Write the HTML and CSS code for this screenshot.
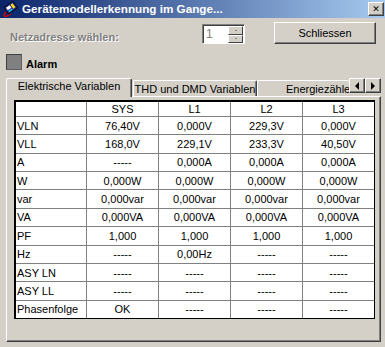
FILE: index.html
```html
<!DOCTYPE html>
<html lang="de">
<head>
    <meta charset="UTF-8">
    <title>Gerätemodellerkennung im Gange...</title>
    <link rel="stylesheet" href="styles.css">
</head>
<body>
    <!-- Titelleiste -->
    <div class="titlebar">
        <svg class="app-icon" width="16" height="16" viewBox="0 0 16 16">
            <path d="M4 11 Q0 15 4 15.5 L9 13" stroke="#e00000" fill="none" stroke-width="1.3"/>
            <g transform="rotate(-35 9 7)">
                <rect x="3.5" y="2.5" width="11" height="8" fill="#1c2c8c" stroke="#000" stroke-width="0.8"/>
                <rect x="5" y="4" width="4.5" height="3" fill="#fff"/>
                <rect x="10.5" y="4" width="2.5" height="5" fill="#ffe000"/>
                <rect x="5" y="8" width="4.5" height="1.5" fill="#30c0e0"/>
            </g>
        </svg>
        <span class="title">Gerätemodellerkennung im Gange...</span>
        <span class="close-btn">&#x2715;</span>
    </div>

    <!-- Adresse + Schliessen -->
    <div class="toprow">
        <span class="addr-label">Netzadresse wählen:</span>
        <div class="spin">
            <span class="spin-value">1</span>
            <div class="spin-btns">
                <span class="spin-btn"><i></i></span>
                <span class="spin-btn"><i></i></span>
            </div>
        </div>
        <button class="btn">Schliessen</button>
    </div>

    <!-- Alarm -->
    <div class="alarm">
        <span class="led"></span>
        <span class="alarm-text">Alarm</span>
    </div>

    <!-- Reiter -->
    <div class="tabs">
        <div class="tab active tab-1">Elektrische Variablen</div>
        <div class="tab tab-2">THD und DMD Variablen</div>
        <div class="tab tab-3">Energiezähle</div>
        <div class="tab-scroll">
            <span class="arrow-btn"><i class="arrow-left"></i></span>
            <span class="arrow-btn"><i class="arrow-right"></i></span>
        </div>
    </div>

    <div class="panel">
        <div class="grid" id="grid"></div>
    </div>

    <script>
        // Messwerte
        const rows = [
            ["", "SYS", "L1", "L2", "L3"],
            ["VLN", "76,40V", "0,000V", "229,3V", "0,000V"],
            ["VLL", "168,0V", "229,1V", "233,3V", "40,50V"],
            ["A", "-----", "0,000A", "0,000A", "0,000A"],
            ["W", "0,000W", "0,000W", "0,000W", "0,000W"],
            ["var", "0,000var", "0,000var", "0,000var", "0,000var"],
            ["VA", "0,000VA", "0,000VA", "0,000VA", "0,000VA"],
            ["PF", "1,000", "1,000", "1,000", "1,000"],
            ["Hz", "-----", "0,00Hz", "-----", "-----"],
            ["ASY LN", "-----", "-----", "-----", "-----"],
            ["ASY LL", "-----", "-----", "-----", "-----"],
            ["Phasenfolge", "OK", "-----", "-----", "-----"]
        ];

        const grid = document.getElementById('grid');
        rows.forEach(row => {
            row.forEach((value, i) => {
                const cell = document.createElement('div');
                cell.classList.add('cell');
                if (i === 0) cell.classList.add('label');
                cell.textContent = value;
                grid.appendChild(cell);
            });
        });
    </script>
</body>
</html>
```

FILE: styles.css
```css
* {
    margin: 0;
    padding: 0;
    box-sizing: border-box;
}

body {
    width: 385px;
    height: 347px;
    overflow: hidden;
    background: #d4d0c8;
    font-family: "Liberation Sans", Arial, sans-serif;
    font-size: 11px;
    color: #000;
}

/* Titelleiste */
.titlebar {
    height: 18px;
    display: flex;
    align-items: center;
    background: linear-gradient(to right, #0a246a, #a6caf0);
    padding: 0 1px 0 2px;
}
.app-icon {
    flex-shrink: 0;
}
.title {
    margin-left: 4px;
    color: #fff;
    font-weight: bold;
    font-size: 11.7px;
    padding-bottom: 1px;
    flex: 1;
    white-space: nowrap;
}
.close-btn {
    width: 16px;
    height: 14px;
    background: #d4d0c8;
    border-top: 1px solid #fff;
    border-left: 1px solid #fff;
    border-right: 1px solid #404040;
    border-bottom: 1px solid #404040;
    box-shadow: inset -1px -1px #808080;
    display: flex;
    align-items: center;
    justify-content: center;
    font-size: 9px;
    font-weight: bold;
    font-family: "DejaVu Sans", sans-serif;
    line-height: 1;
}

/* Adresse */
.toprow {
    display: flex;
    align-items: flex-start;
    margin-top: 4px;
    padding-left: 10px;
    height: 22px;
}
.addr-label {
    width: 192px;
    margin-top: 9px;
    line-height: 13px;
    font-weight: bold;
    color: #808080;
    text-shadow: 1px 1px #fff;
}
.spin {
    width: 43px;
    height: 20px;
    margin-top: 2px;
    display: flex;
    background: #fff;
    border-top: 1px solid #808080;
    border-left: 1px solid #808080;
    border-right: 1px solid #fff;
    border-bottom: 1px solid #fff;
    box-shadow: inset 1px 1px #404040;
}
.spin-value {
    flex: 1;
    padding: 3px 0 0 3px;
    color: #808080;
    font-size: 12px;
    line-height: 13px;
}
.spin-btns {
    width: 16px;
    display: flex;
    flex-direction: column;
    padding: 1px 1px 0 0;
}
.spin-btn {
    flex: 1;
    background: #d4d0c8;
    border-top: 1px solid #fff;
    border-left: 1px solid #fff;
    border-right: 1px solid #404040;
    border-bottom: 1px solid #404040;
    display: flex;
    align-items: center;
    justify-content: center;
}
.spin-btn i {
    width: 2px;
    height: 1px;
    background: #808080;
}
.btn {
    margin-left: 29px;
    width: 102px;
    height: 22px;
    background: #d4d0c8;
    border-top: 1px solid #fff;
    border-left: 1px solid #fff;
    border-right: 1px solid #404040;
    border-bottom: 1px solid #404040;
    box-shadow: inset -1px -1px #808080;
    font-family: inherit;
    font-size: 11px;
    color: #000;
}

/* Alarm */
.alarm {
    display: flex;
    align-items: center;
    margin-top: 10px;
    padding-left: 6px;
    height: 16px;
}
.led {
    width: 16px;
    height: 16px;
    background: #808080;
    border: 1px solid #404040;
    border-right-color: #606060;
    border-bottom-color: #606060;
}
.alarm-text {
    margin-left: 4px;
    margin-top: 3px;
    font-weight: bold;
}

/* Reiter */
.tabs {
    display: flex;
    align-items: flex-end;
    height: 18px;
    margin: 8px 0 0 6px;
}
.tab {
    height: 16px;
    padding-top: 2px;
    line-height: 13px;
    white-space: nowrap;
    overflow: hidden;
    display: flex;
    justify-content: center;
    border-top: 1px solid #fff;
    border-left: 1px solid #fff;
    border-right: 1px solid #404040;
    box-shadow: inset -1px 0 #808080;
    border-radius: 2px 2px 0 0;
}
.tab.active {
    height: 19px;
    padding-top: 1px;
    margin-bottom: -1px;
    background: #d4d0c8;
    position: relative;
    z-index: 1;
}
.tab-1 {
    width: 126px;
}
.tab-2 {
    width: 124px;
    margin-left: 1px;
}
.tab-3 {
    width: 92px;
    justify-content: flex-start;
    padding-left: 28px;
    border-right: none;
    box-shadow: none;
}
.tab-scroll {
    align-self: flex-start;
    display: flex;
}
.arrow-btn {
    width: 16px;
    height: 15px;
    background: #d4d0c8;
    border-top: 1px solid #fff;
    border-left: 1px solid #fff;
    border-right: 1px solid #404040;
    border-bottom: 1px solid #404040;
    box-shadow: inset -1px -1px #808080;
    display: flex;
    align-items: center;
    justify-content: center;
}
.arrow-left {
    border-right: 4px solid #000;
    border-top: 4px solid transparent;
    border-bottom: 4px solid transparent;
}
.arrow-right {
    border-left: 4px solid #000;
    border-top: 4px solid transparent;
    border-bottom: 4px solid transparent;
}

/* Tabelle */
.panel {
    margin-left: 6px;
    width: 375px;
    height: 246px;
    border-top: 1px solid #fff;
    border-left: 1px solid #fff;
    border-right: 1px solid #404040;
    border-bottom: 1px solid #404040;
    box-shadow: inset -1px -1px #808080;
    padding: 3px 0 0 7px;
}
.grid {
    display: grid;
    grid-template-columns: 70px 71px 71px 71px 71px;
    grid-template-rows: 14px;
    grid-auto-rows: 17.36px;
    gap: 1px;
    width: max-content;
    background: #808080;
    border-style: solid;
    border-color: #000;
    border-width: 2px 1px 1px 2px;
}
.cell {
    background: #fff;
    display: flex;
    align-items: center;
    justify-content: center;
    white-space: nowrap;
    overflow: hidden;
}
.cell.label {
    justify-content: flex-start;
    padding-left: 1px;
}
```
